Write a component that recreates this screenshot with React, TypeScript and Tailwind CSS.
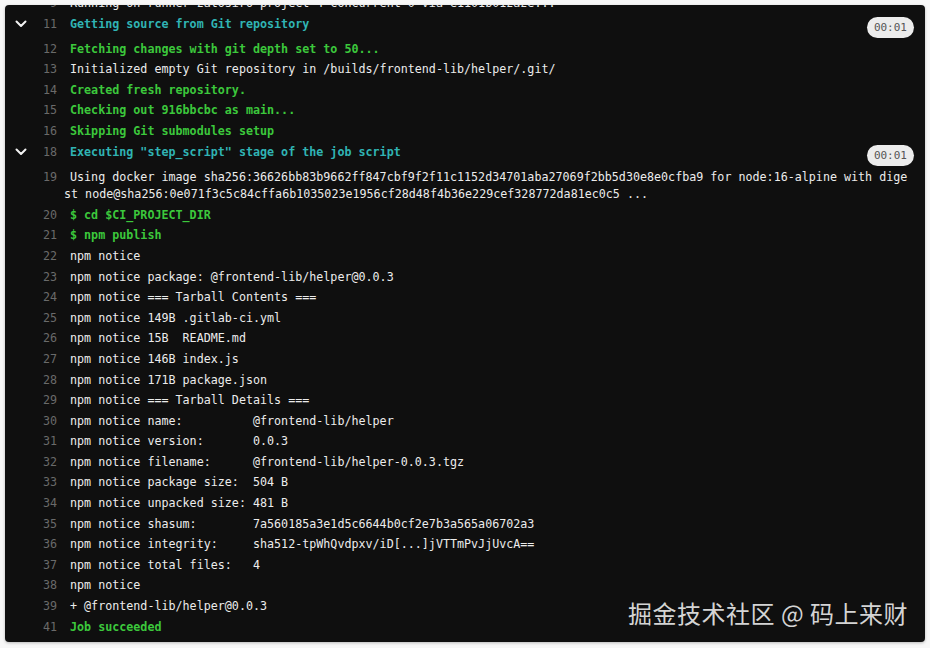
import React from "react";

type Line = { n: number; text: string; color: "w" | "g" | "c"; header?: boolean; bold?: boolean };

const pad = (s: string) => s.padEnd(15, " ");

const lines: Line[] = [
  { n: 9, text: "Running on runner-zatosiro-project-4-concurrent-0 via e1101b01zaze...", color: "w" },
  { n: 11, text: "Getting source from Git repository", color: "c", header: true },
  { n: 12, text: "Fetching changes with git depth set to 50...", color: "g" },
  { n: 13, text: "Initialized empty Git repository in /builds/frontend-lib/helper/.git/", color: "w" },
  { n: 14, text: "Created fresh repository.", color: "g" },
  { n: 15, text: "Checking out 916bbcbc as main...", color: "g" },
  { n: 16, text: "Skipping Git submodules setup", color: "g" },
  { n: 18, text: 'Executing "step_script" stage of the job script', color: "c", header: true },
  {
    n: 19,
    text: "Using docker image sha256:36626bb83b9662ff847cbf9f2f11c1152d34701aba27069f2bb5d30e8e0cfba9 for node:16-alpine with digest node@sha256:0e071f3c5c84cffa6b1035023e1956cf28d48f4b36e229cef328772da81ec0c5 ...",
    color: "w",
  },
  { n: 20, text: "$ cd $CI_PROJECT_DIR", color: "g" },
  { n: 21, text: "$ npm publish", color: "g" },
  { n: 22, text: "npm notice", color: "w" },
  { n: 23, text: "npm notice package: @frontend-lib/helper@0.0.3", color: "w" },
  { n: 24, text: "npm notice === Tarball Contents ===", color: "w" },
  { n: 25, text: "npm notice 149B .gitlab-ci.yml", color: "w" },
  { n: 26, text: "npm notice 15B  README.md", color: "w" },
  { n: 27, text: "npm notice 146B index.js", color: "w" },
  { n: 28, text: "npm notice 171B package.json", color: "w" },
  { n: 29, text: "npm notice === Tarball Details ===", color: "w" },
  { n: 30, text: "npm notice " + pad("name:") + "@frontend-lib/helper", color: "w" },
  { n: 31, text: "npm notice " + pad("version:") + "0.0.3", color: "w" },
  { n: 32, text: "npm notice " + pad("filename:") + "@frontend-lib/helper-0.0.3.tgz", color: "w" },
  { n: 33, text: "npm notice " + pad("package size:") + "504 B", color: "w" },
  { n: 34, text: "npm notice " + pad("unpacked size:") + "481 B", color: "w" },
  { n: 35, text: "npm notice " + pad("shasum:") + "7a560185a3e1d5c6644b0cf2e7b3a565a06702a3", color: "w" },
  { n: 36, text: "npm notice " + pad("integrity:") + "sha512-tpWhQvdpxv/iD[...]jVTTmPvJjUvcA==", color: "w" },
  { n: 37, text: "npm notice " + pad("total files:") + "4", color: "w" },
  { n: 38, text: "npm notice", color: "w" },
  { n: 39, text: "+ @frontend-lib/helper@0.0.3", color: "w" },
  { n: 41, text: "Job succeeded", color: "g" },
];

const colorClass = {
  w: "text-[#ececec] font-normal",
  g: "text-[#3cc83c] font-bold",
  c: "text-[#30b4b4] font-bold",
};

function Chevron() {
  return (
    <svg width="12" height="8" viewBox="0 0 12 8" className="block">
      <polyline points="1.5,1.5 6,6 10.5,1.5" fill="none" stroke="#f2f2f2" strokeWidth="2" strokeLinecap="round" strokeLinejoin="round" />
    </svg>
  );
}

function Row({ line }: { line: Line }) {
  return (
    <div className={"flex items-start " + (line.header ? "h-[25px]" : "")}>
      <div className="w-[52px] shrink-0 flex items-center justify-between py-[1.5px] leading-[17.6px]">
        <div className="ml-[10px] w-[12px] flex items-center h-[17.6px]">{line.header ? <Chevron /> : null}</div>
        <span className="text-[#6a6a6a]">{line.n}</span>
      </div>
      <div
        className={
          "ml-[7px] w-[846px] py-[1.5px] leading-[17.6px] whitespace-pre-wrap break-all indent-[6px] " +
          colorClass[line.color]
        }
      >
        {line.text}
      </div>
      {line.header ? (
        <div className="ml-auto mr-[11px] mt-[3px] h-[21px] px-[7px] rounded-full bg-[#ececec] text-[#555] text-[11px] leading-[21px]">
          00:01
        </div>
      ) : null}
    </div>
  );
}

export default function App() {
  return (
    <div className="w-[930px] h-[648px] bg-[#f7f7f7] p-[5px] pb-[6px]">
      <div
        className="relative h-full bg-[#0f0f0f] rounded-[4px] overflow-hidden shadow-[0_1px_3px_rgba(0,0,0,0.25)]"
        style={{ fontFamily: '"DejaVu Sans Mono", "Liberation Mono", monospace' }}
      >
        <div className="text-[11.7px] mt-[-11.5px]">
          {lines.map((l) => (
            <Row key={l.n} line={l} />
          ))}
        </div>
        <div
          className="absolute right-[17px] bottom-[15px] text-[24px] leading-[28px] text-[#d4d4d4] tracking-[0.5px]"
          style={{ fontFamily: '"Noto Sans CJK SC", "Noto Sans", sans-serif' }}
        >
          掘金技术社区 @ 码上来财
        </div>
      </div>
    </div>
  );
}
